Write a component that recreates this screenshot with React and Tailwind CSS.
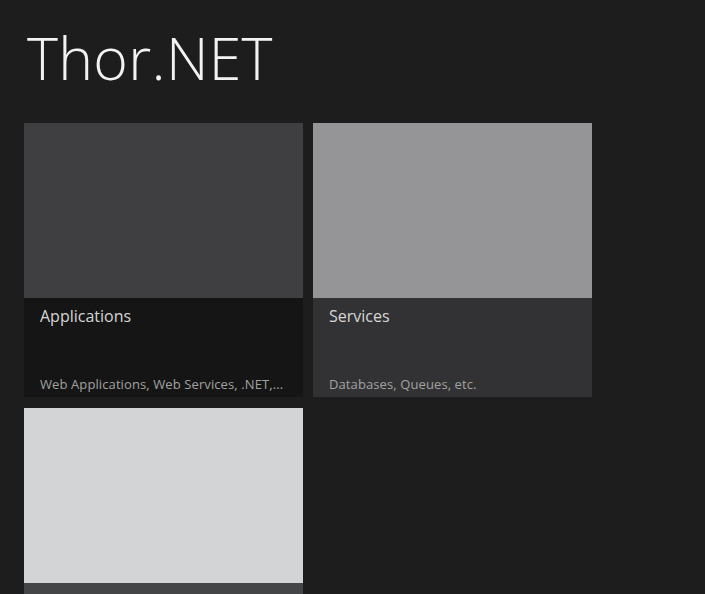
const tiles = [
  {
    title: "Applications",
    sub: "Web Applications, Web Services, .NET,...",
    top: "bg-[#3f3f41]",
    bottom: "bg-[#151515]",
  },
  {
    title: "Services",
    sub: "Databases, Queues, etc.",
    top: "bg-[#959598]",
    bottom: "bg-[#323234]",
  },
  {
    top: "bg-[#d3d4d6]",
    bottom: "bg-[#444546]",
  },
];

const Tile = ({ tile }) => (
  <div className="flex flex-col w-[279px]">
    <div className={`h-[175px] ${tile.top}`} />
    <div className={`h-[99px] flex flex-col justify-between pl-4 pr-3 pt-[6px] pb-[3px] ${tile.bottom}`}>
      {tile.title && (
        <>
          <div className="text-[16px] text-[#d6d6d6]">{tile.title}</div>
          <div className="text-[13px] tracking-[0.1px] text-[#a2a2a2] truncate">{tile.sub}</div>
        </>
      )}
    </div>
  </div>
);

export default function App() {
  return (
    <div
      className="w-[705px] h-[594px] overflow-hidden bg-[#1d1d1d] pl-6"
      style={{ fontFamily: '"Open Sans", "Noto Sans", sans-serif' }}
    >
      <h1 className="pt-[21px] pl-[3px] h-[123px] text-[59px] font-light leading-[72px] text-[#f2f2f2] tracking-[0.3px]">
        Thor.NET
      </h1>
      <div className="grid grid-cols-[279px_279px] gap-x-[10px] gap-y-[11px]">
        {tiles.map((t, i) => (
          <Tile key={i} tile={t} />
        ))}
      </div>
    </div>
  );
}
